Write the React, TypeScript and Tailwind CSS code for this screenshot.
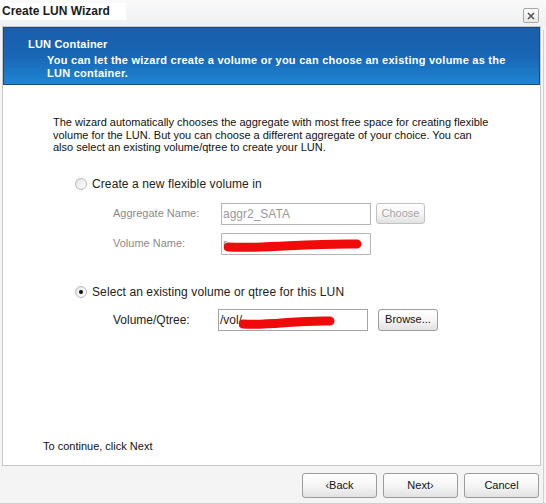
import React from "react";

function Radio({ checked }: { checked?: boolean }) {
  return (
    <span className="relative inline-flex h-[12px] w-[12px] items-center justify-center rounded-full border border-[#b9b9b9] bg-gradient-to-br from-[#e4e4e4] to-white">
      {checked && <span className="h-[4px] w-[4px] rounded-full bg-[#111]" />}
    </span>
  );
}

function Btn({ children, w, h, disabled }: { children: React.ReactNode; w: string; h: string; disabled?: boolean }) {
  return (
    <div
      className={`${w} ${h} flex items-center justify-center rounded-[3px] border ${
        disabled ? "border-[#c2c2c2] text-[#a6a6a6]" : "border-[#9c9c9c] text-[#111]"
      } bg-gradient-to-b from-white via-[#f6f6f6] to-[#e2e2e2] text-[11px]`}
    >
      {children}
    </div>
  );
}

function Scribble({ w }: { w: number }) {
  return (
    <svg width={w} height="14" viewBox={`0 0 ${w} 14`} className="absolute">
      <path
        d={`M4 9 C ${w * 0.3} 11, ${w * 0.6} 5, ${w - 5} 6`}
        stroke="#f00a0a"
        strokeWidth="9"
        strokeLinecap="round"
        fill="none"
      />
    </svg>
  );
}

export default function App() {
  return (
    <div
      className="relative h-[504px] w-[546px] overflow-hidden bg-[#f4f4f4] text-[#111]"
      style={{ fontFamily: "Tahoma, 'Liberation Sans', Arial, sans-serif" }}
    >
      {/* title bar */}
      <div className="flex h-[26px] items-start justify-between bg-gradient-to-b from-[#fafafa] to-[#eef0f2]">
        <div className="mt-[3px] bg-white pl-[2px] pr-[16px] text-[12px] font-bold leading-[17px] text-[#1a1a1a]">
          Create LUN Wizard
        </div>
        <div className="mr-[7px] mt-[8px] flex h-[15px] w-[16px] items-center justify-center rounded-[2px] border border-[#a8a8a8] bg-gradient-to-b from-white to-[#e6e6e6]">
          <svg width="8" height="8" viewBox="0 0 8 8">
            <path d="M1 1 L7 7 M7 1 L1 7" stroke="#555" strokeWidth="1.6" />
          </svg>
        </div>
      </div>

      {/* main panel */}
      <div className="ml-[2px] mr-[5px] flex h-[440px] flex-col border border-[#c9c9c9] bg-white">
        <div className="h-[58px] border border-[#1b4a80] bg-gradient-to-b from-[#1a5eab] via-[#1866b5] to-[#1f86d2] text-white">
          <div className="ml-[24px] mt-[10px] text-[11px] font-bold leading-[13px] tracking-[0.2px]">LUN Container</div>
          <div className="ml-[43px] mt-[3px] text-[11px] font-bold leading-[13px] tracking-[0.25px]">
            You can let the wizard create a volume or you can choose an existing volume as the
            <br />
            LUN container.
          </div>
        </div>

        <div className="ml-[50px] mt-[31px] text-[11px] leading-[12.5px] text-[#111]">
          The wizard automatically chooses the aggregate with most free space for creating flexible
          <br />
          volume for the LUN. But you can choose a different aggregate of your choice. You can
          <br />
          also select an existing volume/qtree to create your LUN.
        </div>

        <div className="ml-[72px] mt-[23px] flex items-center gap-[5px]">
          <Radio />
          <span className="text-[12px] leading-[14px] tracking-[0.1px] text-[#222]">Create a new flexible volume in</span>
        </div>

        <div className="ml-[110px] mt-[12px] flex items-center">
          <span className="w-[108px] text-[11px] text-[#8a8a8a]">Aggregate Name:</span>
          <div className="flex h-[22px] w-[150px] items-center border border-[#b5b5b5] bg-white pl-[1px] text-[12px] text-[#9a9a9a]">
            aggr2_SATA
          </div>
          <div className="ml-[5px]">
            <Btn w="w-[49px]" h="h-[21px]" disabled>
              Choose
            </Btn>
          </div>
        </div>

        <div className="ml-[110px] mt-[8px] flex items-center">
          <span className="w-[108px] text-[11px] text-[#8a8a8a]">Volume Name:</span>
          <div className="relative flex h-[22px] w-[150px] items-center border border-[#b5b5b5] bg-white pl-[1px] text-[12px] text-[#9a9a9a]">
            r
            <div className="absolute left-[2px] top-[4px]">
              <Scribble w={138} />
            </div>
          </div>
        </div>

        <div className="ml-[72px] mt-[30px] flex items-center gap-[5px]">
          <Radio checked />
          <span className="text-[12px] leading-[14px] tracking-[0.1px] text-[#222]">Select an existing volume or qtree for this LUN</span>
        </div>

        <div className="ml-[110px] mt-[10px] flex items-center">
          <span className="w-[105px] text-[12px] text-[#222]">Volume/Qtree:</span>
          <div className="relative flex h-[22px] w-[150px] items-center border border-[#a5a5a5] bg-white pl-[1px] text-[12px] text-[#222]">
            /vol/
            <div className="absolute left-[20px] top-[5px]">
              <Scribble w={96} />
            </div>
          </div>
          <div className="ml-[10px]">
            <Btn w="w-[60px]" h="h-[22px]">Browse...</Btn>
          </div>
        </div>

        <div className="flex-1" />
        <div className="mb-[11px] ml-[40px] text-[11px] text-[#111]">To continue, click Next</div>
      </div>

      {/* footer */}
      <div className="mr-[7px] mt-[7px] flex justify-end gap-[6px]">
        <Btn w="w-[75px]" h="h-[25px]">‹Back</Btn>
        <Btn w="w-[75px]" h="h-[25px]">Next›</Btn>
        <Btn w="w-[75px]" h="h-[25px]">Cancel</Btn>
      </div>

      <div className="absolute bottom-0 left-0 right-0 h-[1px] bg-[#d0d0d0]" />
      <div className="absolute bottom-0 right-[2px] top-[30px] w-[1px] bg-[#d0d0d0]" />
    </div>
  );
}
